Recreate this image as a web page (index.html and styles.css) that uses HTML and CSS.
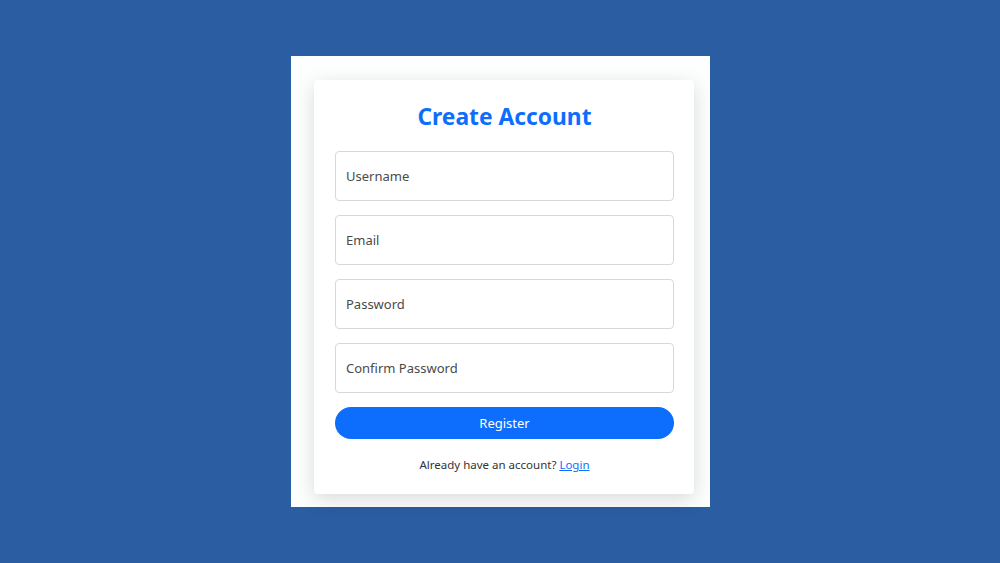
FILE: index.html
```html
<!DOCTYPE html>
<html lang="en">
<head>
<meta charset="utf-8">
<title>Create Account</title>
<link rel="stylesheet" href="styles.css">
</head>
<body>
<div class="frame">
  <div class="card">
    <h2 class="title">Create Account</h2>
    <form class="form">
      <input class="field" type="text" placeholder="Username">
      <input class="field" type="email" placeholder="Email">
      <input class="field" type="password" placeholder="Password">
      <input class="field" type="password" placeholder="Confirm Password">
      <button class="btn" type="button">Register</button>
    </form>
    <p class="foot">Already have an account? <a href="#" class="link">Login</a></p>
  </div>
</div>
</body>
</html>
```
FILE: styles.css
```css
* { box-sizing: border-box; }
html, body { margin: 0; padding: 0; }
body {
  width: 1000px;
  height: 563px;
  background: #2b5da2;
  font-family: "Noto Sans", "Open Sans", sans-serif;
  display: flex;
  align-items: flex-start;
  justify-content: center;
}
.frame {
  margin-top: 56px;
  margin-left: 1px;
  width: 419px;
  height: 451px;
  background: #fdfefe;
  padding: 24px 16px 13px 23px;
}
.card {
  width: 380px;
  height: 414px;
  background: #fff;
  border-radius: 4px;
  box-shadow: 0 5px 20px rgba(0, 0, 0, 0.15);
  padding: 20px 20px 20px 21px;
}
.title {
  margin: 1px 0 19px;
  font-size: 22.8px;
  line-height: 31px;
  font-weight: 700;
  color: #0d6efd;
  text-align: center;
}
.form {
  display: flex;
  flex-direction: column;
  gap: 14px;
}
.field {
  width: 339px;
  height: 50px;
  border: 1px solid #d6d9dc;
  border-radius: 4px;
  padding: 0 10px;
  font-family: inherit;
  font-size: 13px;
  color: #333;
  background: #fff;
  outline: none;
}
.field::placeholder { color: #4a4a4a; }
.btn {
  width: 339px;
  height: 32px;
  border: none;
  border-radius: 16px;
  background: #0d6efd;
  color: #fff;
  font-family: inherit;
  font-size: 13px;
  padding: 0;
}
.foot {
  margin: 16px 0 0;
  font-size: 11.5px;
  line-height: 20px;
  color: #333;
  text-align: center;
}
.link { color: #0d6efd; text-decoration: underline; }
```
